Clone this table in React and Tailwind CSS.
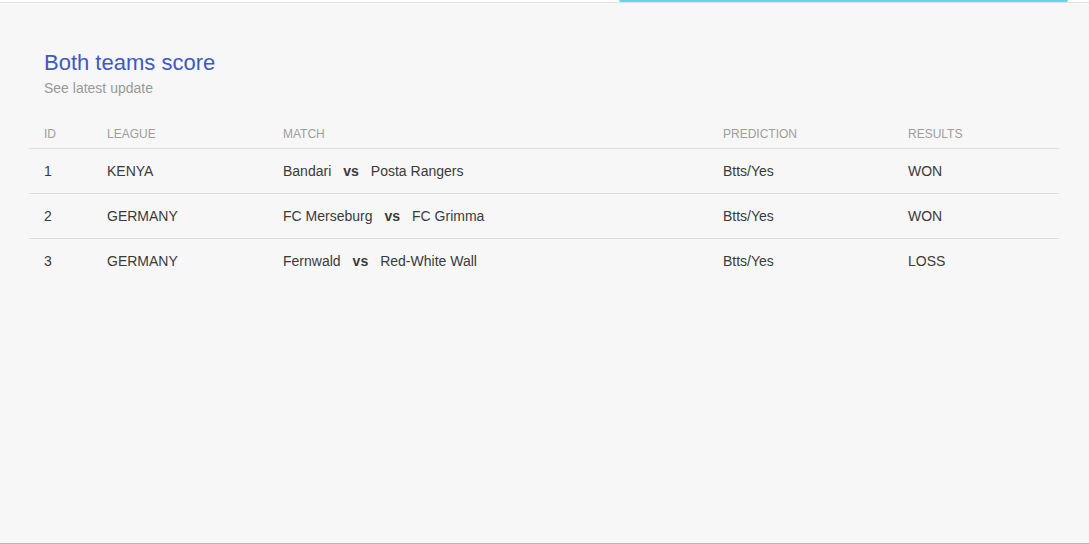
const ROWS = [
  { id: 1, league: 'KENYA', home: 'Bandari', away: 'Posta Rangers', prediction: 'Btts/Yes', result: 'WON' },
  { id: 2, league: 'GERMANY', home: 'FC Merseburg', away: 'FC Grimma', prediction: 'Btts/Yes', result: 'WON' },
  { id: 3, league: 'GERMANY', home: 'Fernwald', away: 'Red-White Wall', prediction: 'Btts/Yes', result: 'LOSS' },
];

export default function App() {
  return (
    <div
      className="h-[544px] w-full bg-[#f7f7f7] border-b border-[#b5b5b5] flex flex-col"
      style={{ fontFamily: '"Liberation Sans", Arial, sans-serif' }}
    >
      {/* top tab strip */}
      <div className="h-[2px] pl-[619px] bg-white">
        <div className="w-[449px] h-[2px] bg-[#62d3ee] rounded-b-sm" />
      </div>
      <div className="h-px bg-[#e2e2e2]" />

      <div className="px-[29px] pr-[30px]">
        <div className="pl-[15px] pt-[47px]">
          <h1 className="text-[22px] leading-[26px] text-[#3d5ac3]">Both teams score</h1>
          <p className="mt-[2px] text-[14px] leading-[20px] text-[#9a9a9a]">See latest update</p>
        </div>

        <table className="mt-[20px] w-full table-fixed border-collapse text-left">
          <thead>
            <tr className="h-[30px] border-b border-[#dcdcdc] text-[12px] text-[#9e9e9e] uppercase">
              <th className="font-normal pl-[15px] pt-[2px] w-[63px]">ID</th>
              <th className="font-normal pl-[15px] pt-[2px] w-[176px]">League</th>
              <th className="font-normal pl-[15px] pt-[2px] w-[440px]">Match</th>
              <th className="font-normal pl-[15px] pt-[2px] w-[185px]">Prediction</th>
              <th className="font-normal pl-[15px] pt-[2px]">Results</th>
            </tr>
          </thead>
          <tbody className="text-[14px] text-[#3a3a3a]">
            {ROWS.map((r, idx) => (
              <tr
                key={r.id}
                className={`h-[45px] ${idx < ROWS.length - 1 ? 'border-b border-[#dcdcdc]' : ''}`}
              >
                <td className="pl-[15px] pt-[2px]">{r.id}</td>
                <td className="pl-[15px] pt-[2px]">{r.league}</td>
                <td className="pl-[15px] pt-[2px]">
                  {r.home}
                  <span className="font-bold mx-3">vs</span>
                  {r.away}
                </td>
                <td className="pl-[15px] pt-[2px]">{r.prediction}</td>
                <td className="pl-[15px] pt-[2px]">{r.result}</td>
              </tr>
            ))}
          </tbody>
        </table>
      </div>
    </div>
  );
}
